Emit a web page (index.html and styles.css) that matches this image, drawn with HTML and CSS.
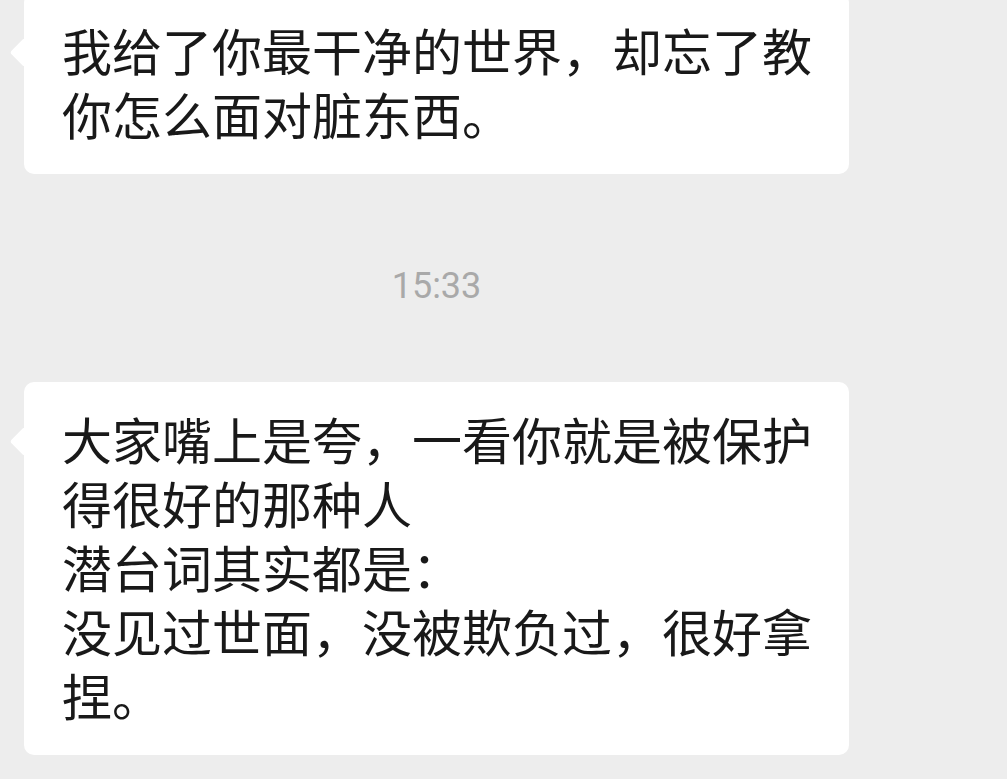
FILE: index.html
```html
<!DOCTYPE html>
<html lang="zh-CN">
<head>
<meta charset="utf-8">
<meta name="viewport" content="width=device-width, initial-scale=1.0" />
<link rel="stylesheet" href="styles.css">
</head>
<body>
<div class="chat">
  <div class="bubble first">
    <p>我给了你最干净的世界，却忘了教你怎么面对脏东西。</p>
  </div>

  <div class="time">15:33</div>

  <div class="bubble">
    <p>大家嘴上是夸，一看你就是被保护得很好的那种人<br>潜台词其实都是：<br>没见过世面，没被欺负过，很好拿捏。</p>
  </div>
</div>
</body>
</html>
```

FILE: styles.css
```css
html, body {
  margin: 0;
  padding: 0;
  background: #ededed;
}

.chat {
  width: 873px;
  display: flex;
  flex-direction: column;
}

.bubble {
  position: relative;
  width: 750px;
  margin-left: 24px;
  padding: 24px 37px 29px 38px;
  background: #fff;
  border-radius: 10px;
}

.bubble.first {
  margin-top: -7px;
}

/* little arrow on the left side of the bubble */
.bubble::before {
  content: "";
  position: absolute;
  left: -10px;
  top: 49px;
  width: 21px;
  height: 21px;
  background: #fff;
  border-radius: 3px;
  transform: rotate(45deg);
}

.bubble p {
  position: relative;
  margin: 0;
  font-family: "Noto Sans CJK SC", "Noto Sans", sans-serif;
  font-size: 50px;
  line-height: 64px;
  color: #191919;
  word-break: break-all;
}

.time {
  margin: 92px 0 76px;
  text-align: center;
  font-family: Roboto, "Liberation Sans", sans-serif;
  font-size: 36px;
  line-height: 40px;
  color: #a9a9a9;
}
```
